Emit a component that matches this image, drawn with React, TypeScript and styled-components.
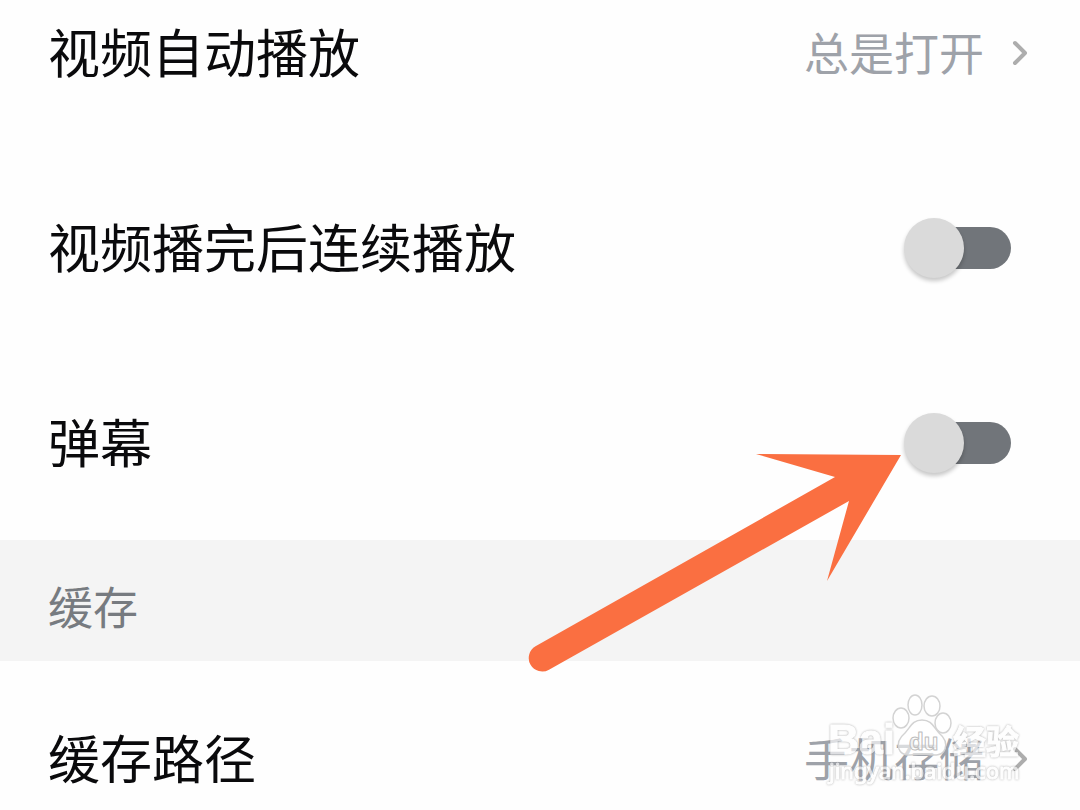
import React, { useState } from "react";
import styled, { createGlobalStyle, css } from "styled-components";

const GlobalStyle = createGlobalStyle`
  *, *::before, *::after { box-sizing: border-box; }
  body {
    margin: 0;
    overflow: hidden;
    background: #fefefe;
    color: #0a0a0c;
    font-family: "Noto Sans CJK SC", "Noto Sans", sans-serif;
  }
`;

const Page = styled.main`
  display: flex;
  flex-direction: column;
  width: 100%;
`;

const Row = styled.div<{ $edge?: "top" | "bottom" }>`
  position: relative;
  display: flex;
  align-items: center;
  justify-content: space-between;
  padding: 60px 52px 60px 48px;
  ${(p) => p.$edge === "top" && css`padding-top: 15px;`}
  ${(p) => p.$edge === "bottom" && css`padding-bottom: 14px;`}
`;

const labelText = css`
  padding-bottom: 4px;
  font-size: 52px;
  line-height: 71px;
  white-space: nowrap;
`;

const Label = styled.label`
  ${labelText}
`;

const Title = styled.span`
  ${labelText}
`;

const SectionHeader = styled.h2`
  margin: 0;
  padding: 34px 48px 23px;
  background: #f4f4f4;
  color: #777b80;
  font-size: 45px;
  font-weight: 400;
  line-height: 64px;
`;

const ValueButton = styled.button`
  display: flex;
  align-items: center;
  gap: 28px;
  padding: 0;
  border: 0;
  background: none;
  color: #9ea2a9;
  font-family: inherit;
  font-size: 45px;
  line-height: 64px;
  white-space: nowrap;
  cursor: pointer;
`;

const ValueText = styled.span`
  padding-bottom: 2px;
`;

const Switch = styled.input`
  position: relative;
  flex: none;
  width: 107px;
  height: 60px;
  margin: 0 17px 0 0;
  appearance: none;
  cursor: pointer;

  &::before {
    content: "";
    position: absolute;
    inset: 9px 0 9px 12px;
    border-radius: 21px;
    background: #71757a;
  }

  &::after {
    content: "";
    position: absolute;
    top: 0;
    left: 0;
    width: 60px;
    height: 60px;
    border-radius: 50%;
    background: #dadada;
    box-shadow: 0 3px 4px rgba(0, 0, 0, 0.22);
  }

  &:checked::before {
    background: #f9a58a;
    inset: 9px 12px 9px 0;
  }

  &:checked::after {
    left: 47px;
    background: #f96f41;
  }
`;

const Arrow = styled.svg`
  position: absolute;
  top: 105px;
  right: 176px;
  z-index: 1;
  pointer-events: none;
`;

const Watermark = styled.svg`
  position: absolute;
  top: 27px;
  right: 50px;
  pointer-events: none;
`;

const Outlined = styled.g`
  fill: #fff;
  stroke: #fff;
  stroke-width: 1px;
  stroke-linejoin: round;
  opacity: 0.65;
  filter: drop-shadow(0 0 1px #888);
`;

const Chevron = () => (
  <svg width="16" height="26" viewBox="0 0 16 26" fill="none" aria-hidden="true">
    <path d="M3 3L13 13L3 23" stroke="#adadad" strokeWidth="4" strokeLinecap="round" strokeLinejoin="round" />
  </svg>
);

const PointerArrow = () => (
  <Arrow width="376" height="224" viewBox="0 0 376 224" aria-hidden="true">
    <path
      d="M373 5L228 4L307 27L7.500 196.300A13.500 13.500 0 0 0 21 219.700L321 51L299 131Z"
      fill="#fa6f41"
    />
  </Arrow>
);

const BaiduWatermark = () => (
  <Watermark width="210" height="104" viewBox="0 0 210 104" aria-label="Baidu 经验">
    <Outlined>
      <text x="8" y="66" fontFamily="Liberation Sans, sans-serif" fontWeight="700" fontSize="43">Bai</text>
      <text x="133" y="66" fontFamily="Noto Sans CJK SC, sans-serif" fontWeight="700" fontSize="33">经验</text>
      <text x="9" y="91" fontFamily="Noto Sans, sans-serif" fontWeight="400" fontSize="22">jingyan.baidu.com</text>
    </Outlined>
    <g fill="#fff" fillOpacity="0.6" stroke="#d3d3d3" strokeWidth="1.500" strokeLinejoin="round">
      <ellipse cx="95" cy="17" rx="7" ry="10" />
      <ellipse cx="112" cy="18" rx="8" ry="10" />
      <ellipse cx="81" cy="30" rx="8" ry="10" />
      <ellipse cx="123" cy="35" rx="8" ry="10" />
      <path d="M102 32C93 32 91 38 85 45C79 50 77 55 79 61C82 69 91 67 102 66C113 67 122 69 125 61C127 55 125 50 119 45C113 38 111 32 102 32Z" />
      <text x="89" y="62" fontFamily="Liberation Sans, sans-serif" fontWeight="700" fontSize="24" stroke="#bdbdbd" strokeWidth="1">du</text>
    </g>
  </Watermark>
);

interface SwitchRowProps {
  id: string;
  label: string;
  children?: React.ReactNode;
}

const SwitchRow = ({ id, label, children }: SwitchRowProps) => {
  const [on, setOn] = useState(false);
  return (
    <Row>
      <Label htmlFor={id}>{label}</Label>
      <Switch id={id} type="checkbox" role="switch" checked={on} onChange={(e) => setOn(e.target.checked)} />
      {children}
    </Row>
  );
};

interface ValueRowProps {
  id: string;
  label: string;
  value: string;
  edge?: "top" | "bottom";
  children?: React.ReactNode;
}

const ValueRow = ({ id, label, value, edge, children }: ValueRowProps) => (
  <Row $edge={edge}>
    <Title id={id}>{label}</Title>
    <ValueButton type="button" aria-describedby={id}>
      <ValueText>{value}</ValueText>
      <Chevron />
    </ValueButton>
    {children}
  </Row>
);

export default function App() {
  return (
    <>
      <GlobalStyle />
      <Page>
        <ValueRow id="autoplay" label="视频自动播放" value="总是打开" edge="top" />
        <SwitchRow id="continuous" label="视频播完后连续播放" />
        <SwitchRow id="danmaku" label="弹幕">
          <PointerArrow />
        </SwitchRow>
        <SectionHeader>缓存</SectionHeader>
        <ValueRow id="cache-path" label="缓存路径" value="手机存储" edge="bottom">
          <BaiduWatermark />
        </ValueRow>
      </Page>
    </>
  );
}
